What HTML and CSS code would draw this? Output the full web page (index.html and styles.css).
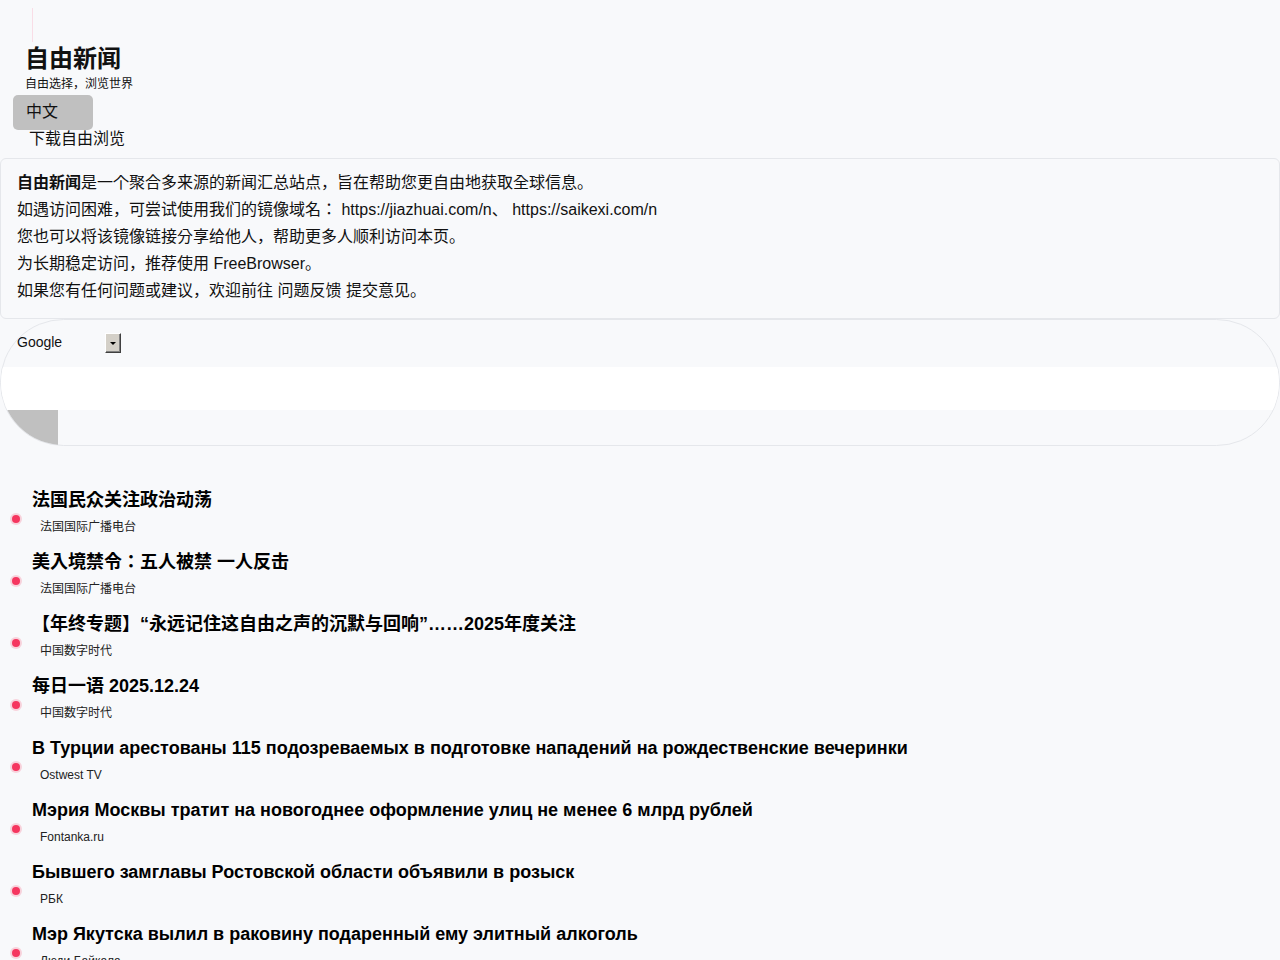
FILE: index.html
```html
<!DOCTYPE html>
<html>
<head>
    <meta charset="UTF-8">
    <meta name="viewport" content="width=device-width, initial-scale=1.0">
    <title>自由新闻</title>
    <link rel="stylesheet" href="styles.css">
</head>
<body>
    <header class="site-header">
        <div class="logo-line"></div>
        <h1 class="site-title">自由新闻</h1>
        <p class="tagline">自由选择，浏览世界</p>
        <button class="lang-btn">中文</button>
        <a class="download-link" href="#">下载自由浏览</a>
    </header>

    <section class="notice">
        <p><strong>自由新闻</strong>是一个聚合多来源的新闻汇总站点，旨在帮助您更自由地获取全球信息。</p>
        <p>如遇访问困难，可尝试使用我们的镜像域名： <a href="#">https://jiazhuai.com/n</a>、 <a href="#">https://saikexi.com/n</a></p>
        <p>您也可以将该镜像链接分享给他人，帮助更多人顺利访问本页。</p>
        <p>为长期稳定访问，推荐使用 <a href="#">FreeBrowser</a>。</p>
        <p>如果您有任何问题或建议，欢迎前往 <a href="#">问题反馈</a> 提交意见。</p>
    </section>

    <form class="search">
        <div class="engine">
            <select class="engine-select">
                <option>Google</option>
            </select>
            <span class="engine-arrow"></span>
        </div>
        <input class="search-input" type="text">
        <button class="search-btn" type="submit" aria-label="搜索"></button>
    </form>

    <ul class="news">
        <li class="news-item">
            <span class="dot"></span>
            <div>
                <h3 class="news-title">法国民众关注政治动荡</h3>
                <div class="news-source">法国国际广播电台</div>
            </div>
        </li>
        <li class="news-item">
            <span class="dot"></span>
            <div>
                <h3 class="news-title">美入境禁令：五人被禁 一人反击</h3>
                <div class="news-source">法国国际广播电台</div>
            </div>
        </li>
        <li class="news-item">
            <span class="dot"></span>
            <div>
                <h3 class="news-title">【年终专题】“永远记住这自由之声的沉默与回响”……2025年度关注</h3>
                <div class="news-source">中国数字时代</div>
            </div>
        </li>
        <li class="news-item">
            <span class="dot"></span>
            <div>
                <h3 class="news-title">每日一语 2025.12.24</h3>
                <div class="news-source">中国数字时代</div>
            </div>
        </li>
        <li class="news-item">
            <span class="dot"></span>
            <div>
                <h3 class="news-title">В Турции арестованы 115 подозреваемых в подготовке нападений на рождественские вечеринки</h3>
                <div class="news-source">Ostwest TV</div>
            </div>
        </li>
        <li class="news-item">
            <span class="dot"></span>
            <div>
                <h3 class="news-title">Мэрия Москвы тратит на новогоднее оформление улиц не менее 6 млрд рублей</h3>
                <div class="news-source">Fontanka.ru</div>
            </div>
        </li>
        <li class="news-item">
            <span class="dot"></span>
            <div>
                <h3 class="news-title">Бывшего замглавы Ростовской области объявили в розыск</h3>
                <div class="news-source">РБК</div>
            </div>
        </li>
        <li class="news-item">
            <span class="dot"></span>
            <div>
                <h3 class="news-title">Мэр Якутска вылил в раковину подаренный ему элитный алкоголь</h3>
                <div class="news-source">Люди Байкала</div>
            </div>
        </li>
    </ul>
</body>
</html>
```

FILE: styles.css
```css
body { margin: 0; background: #f8f9fb; color: #111; font-family: "Liberation Sans", Arial, "Noto Sans CJK KR", sans-serif; }
a { color: inherit; text-decoration: none; }

.site-header { padding: 8px 0 0 0; }
.logo-line { width: 1px; height: 34px; margin-left: 32px; background: #f9dde6; }
.site-title { margin: 2px 0 0 25px; font-size: 24px; line-height: 29px; font-weight: bold; }
.tagline { margin: 4px 0 0 25px; font-size: 12px; line-height: 15px; }
.lang-btn { display: block; margin: 3px 0 0 13px; width: 80px; height: 35px; padding: 0 0 5px 13px; text-align: left; font-family: inherit; font-size: 16px; color: #111; background: #c0c0c0; border: none; border-radius: 5px; }
.download-link { display: block; margin-left: 29px; font-size: 16px; line-height: 18px; }

.notice { margin-top: 10px; padding: 10px 16px 14px; border: 1px solid #e5e7eb; border-radius: 6px; font-size: 16px; line-height: 27px; }
.notice p { margin: 0; }

.search { display: flex; flex-direction: column; align-items: stretch; padding-top: 12px; border: 1px solid #e5e7eb; border-radius: 9999px; overflow: hidden; }
.engine { display: flex; align-items: center; height: 22px; margin: 0 0 13px 16px; }
.engine-select { appearance: none; -webkit-appearance: none; width: 88px; margin-bottom: 2px; padding: 0; border: none; background: transparent; font-family: inherit; font-size: 14px; color: #111; }
.engine-arrow { position: relative; width: 14px; height: 18px; background: #d4d0c8; border: 1px solid; border-color: #fff #404040 #404040 #fff; box-shadow: inset -1px -1px #808080; }
.engine-arrow::after { content: ""; position: absolute; left: 4px; top: 8px; border-left: 3px solid transparent; border-right: 3px solid transparent; border-top: 3px solid #000; }
.search-input { height: 43px; padding: 0; border: none; background: #fff; outline: none; }
.search-btn { width: 57px; height: 35px; border: none; background: #c0c0c0; }

.news { list-style: none; margin: 42px 0 0; padding: 0; }
.news-item { display: flex; margin-bottom: 15px; }
.dot { flex: none; width: 8px; height: 8px; margin: 27px 12px 0; border-radius: 50%; background: #f5365f; box-shadow: 0 0 0 2px rgba(245, 54, 95, 0.2); }
.news-title { margin: 0; font-size: 18px; line-height: 24px; font-weight: bold; color: #000; }
.news-source { margin-top: 7px; padding-left: 8px; font-size: 12px; line-height: 16px; color: #222; }
```
